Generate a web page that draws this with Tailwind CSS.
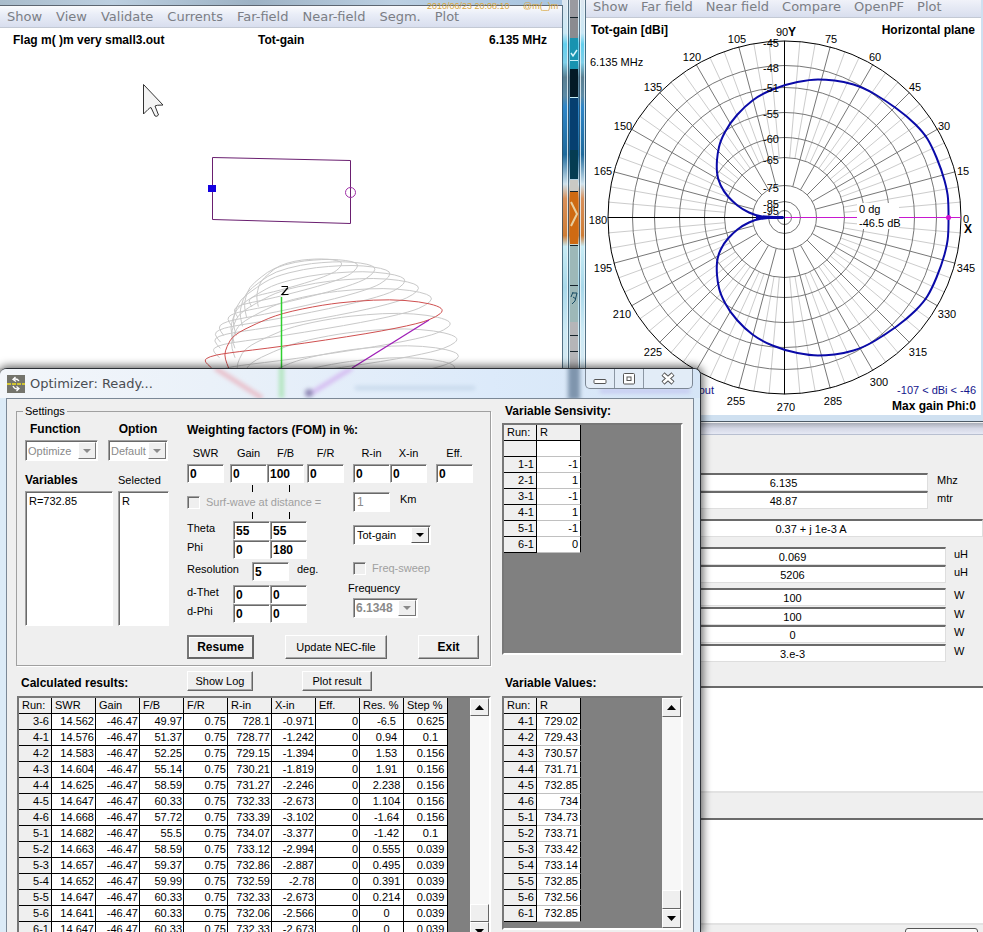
<!DOCTYPE html>
<html lang="en">
<head>
<meta charset="utf-8">
<title>Optimizer</title>
<script src="https://cdn.jsdelivr.net/npm/@tailwindcss/browser@4"></script>
</head>
<body class="relative h-screen overflow-hidden bg-[#efefef] font-['Liberation_Sans',Arial,sans-serif] text-[11px] leading-[14px] text-black">

<!-- desktop strip between the two upper windows -->
<div class="absolute left-[562px] top-0 h-[368px] w-6" aria-hidden="true">
  <svg class="block h-[368px] w-6" viewBox="562 0 24 368">
    <defs>
      <linearGradient id="glass" x1="0" y1="0" x2="0" y2="1">
        <stop offset="0" stop-color="#dde6ef"/><stop offset=".09" stop-color="#c9e8f5"/><stop offset=".12" stop-color="#62cfee"/>
        <stop offset=".17" stop-color="#7fd0ea"/><stop offset=".21" stop-color="#5a7f92"/><stop offset=".26" stop-color="#5c8aa5"/>
        <stop offset=".29" stop-color="#2f86c8"/><stop offset=".42" stop-color="#1f6a9c"/><stop offset=".5" stop-color="#cfe3ee"/>
        <stop offset=".54" stop-color="#d9905a"/><stop offset=".64" stop-color="#cf7d35"/><stop offset=".67" stop-color="#c8ecf5"/>
        <stop offset=".78" stop-color="#a8d8ea"/><stop offset=".9" stop-color="#cdeaf5"/><stop offset="1" stop-color="#d5e8f2"/>
      </linearGradient>
    </defs>
    <rect x="562" y="0" width="24" height="368" fill="url(#glass)"/>
    <path d="M562.5 5V368M568.5 0V368M579.5 0V368M585.500 0V368" stroke="#2b4a60" opacity=".75"/>
    <path d="M567.5 0V368M580.5 0V368M584.500 0V368" stroke="#eef8fc" opacity=".8"/>
    <g>
      <rect x="570" y="0" width="8" height="17" fill="#9a9aa0"/><rect x="570" y="17" width="8" height="21" fill="#8b8b90"/>
      <rect x="570" y="38" width="8" height="31" fill="#1893b0"/><rect x="570" y="69" width="8" height="28" fill="#041a26"/>
      <rect x="570" y="97" width="8" height="82" fill="#063f70"/><rect x="570" y="150" width="8" height="29" fill="#053c52"/>
      <rect x="570" y="180" width="8" height="11" fill="#c9c9c4"/><rect x="570" y="192" width="8" height="52" fill="#cf6a12"/>
      <rect x="570" y="245" width="8" height="123" fill="#9db8b8"/><rect x="570" y="322" width="8" height="46" fill="#b5b5b8"/>
    </g>
    <path d="M570 17.500h8M570 191.500h8M570 245.500h8M570 285.500h8M570 335.500h8M570 351.500h8" stroke="#15222a"/>
    <path d="M570 60.500h8M570 97.500h8" stroke="#c6f0f8"/>
    <path d="M571 53l2 3 4-6" stroke="#d6f3fa" fill="none" stroke-width="1.500"/>
    <path d="M571 202l6 12-6 12" stroke="#e8cfa0" fill="none" stroke-width="2"/>
    <path d="M573 292l-2 5M573 293h4l-2 8-3 3M573 297l3 2" stroke="#164a62" fill="none"/>
  </svg>
</div>

<!-- 3D pattern window -->
<section class="absolute left-0 top-0 flex w-[562px] flex-col bg-white">
  <div class="h-[5px] bg-[linear-gradient(90deg,#a9bccb,#bccfe0_20%,#9db2c4_45%,#bcd0e2_70%,#a7c4e0)]"></div>
  <nav class="flex h-[23px] items-center gap-[14px] border-b border-[#c3c9d4] border-t border-t-[#5d6671] bg-[linear-gradient(180deg,#fafbfd,#e9edf7_40%,#d8deee)] pl-[7px] font-['DejaVu_Sans',Verdana,sans-serif] text-[13px] text-[#7b7e85]">
    <a href="#">Show</a><a href="#">View</a><a href="#">Validate</a><a href="#">Currents</a><a href="#">Far-field</a><a href="#">Near-field</a><a href="#">Segm.</a><a href="#">Plot</a>
  </nav>
  <svg class="block w-full" viewBox="0 28 562 340" font-family="Liberation Sans, Arial, sans-serif" role="img" aria-label="Antenna geometry and 3D gain pattern">
    <g font-size="12" font-weight="bold">
      <text x="13" y="44">Flag m( )m very small3.out</text>
      <text x="258" y="44">Tot-gain</text>
      <text x="547" y="44" text-anchor="end">6.135 MHz</text>
    </g>
    <path d="M212.500 219.500V157.500L350.500 160.500V223.500Z" fill="none" stroke="#6a1f70"/>
    <rect x="208" y="185" width="8" height="7" fill="#1400e0"/>
    <circle cx="350.500" cy="192.500" r="5" fill="none" stroke="#a030a8"/>
    <g id="loops" fill="none"></g>
    <path d="M281.500 297V368" stroke="#2fd02f" stroke-width="1.500"/>
    <path d="M281.500 286.500H288M288 287.500L282 294.500H288.500" fill="none" stroke="#000" stroke-width="1.200"/>
    <path d="M429 320L352 368" stroke="#a020b8" stroke-width="1.300"/>
    <path d="M143.500 84.500V114L148 109.500Q150 107.500 151 107.500L155 116Q157 117 158.500 115L155 106Q156 105 163 105Z" fill="#f4f4f4" stroke="#333"/>
  </svg>
</section>
<div class="absolute left-[427px] top-0 text-[9px] leading-[13px] text-[#d9a53c]">2010/06/23 20:08:10</div>
<div class="absolute left-[523px] top-0 text-[9px] leading-[13px] text-[#d9a53c]">@m(_)m</div>

<!-- polar plot window -->
<section class="absolute left-[586px] right-0 top-0 flex flex-col border-b border-[#4d5a66] bg-[#cfe0f0] pr-[2px] pb-[6px]">
  <nav class="flex h-[18px] items-start gap-[13px] border-b border-[#c3c9d4] bg-[linear-gradient(180deg,#f0f2f9,#d8deee)] pl-[7px] font-['DejaVu_Sans',Verdana,sans-serif] text-[13px] text-[#7b7e85]">
    <a href="#">Show</a><a href="#">Far field</a><a href="#">Near field</a><a href="#">Compare</a><a href="#">OpenPF</a><a href="#">Plot</a>
  </nav>
  <svg class="block w-full bg-white" viewBox="586 18 395 397" font-family="Liberation Sans, Arial, sans-serif" font-size="11" role="img" aria-label="Horizontal plane polar gain plot">
    <g id="grid" fill="none"></g>
    <path d="M608 217.500H784.500M784.500 41V394" stroke="#000"/>
    <path id="lobe" fill="none" stroke="#0a0aa8" stroke-width="2"/>
    <path d="M756 217.500H783" stroke="#0a0aa8" stroke-width="3"/>
    <rect x="785" y="217" width="176" height="1" fill="#c818d0"/>
    <rect x="857" y="203" width="42" height="26" fill="#fff"/>
    <circle cx="948.500" cy="217.500" r="2.500" fill="#d010d0"/>
    <text x="859" y="213">0 dg</text><text x="859" y="227">-46.5 dB</text>
    <g id="ringText" text-anchor="middle"></g>
    <g id="angles" text-anchor="middle"></g>
    <g font-size="12" font-weight="bold">
      <text x="591" y="34">Tot-gain [dBi]</text>
      <text x="975" y="34" text-anchor="end">Horizontal plane</text>
      <text x="788" y="36">Y</text><text x="964" y="233">X</text>
      <text x="976" y="410" text-anchor="end">Max gain Phi:0</text>
    </g>
    <text x="590" y="66">6.135 MHz</text>
    <g fill="#14148c"><text x="976" y="394" text-anchor="end">-107 &lt; dBi &lt; -46</text><text x="714" y="394" text-anchor="end">out</text></g>
  </svg>
</section>

<!-- main window behind the dialog -->
<section class="absolute bottom-0 left-[632px] right-0 top-[423px] flex flex-col overflow-hidden bg-[#efefef] pl-2">
  <div class="-ml-2 h-3 shrink-0 border-b border-[#b8bfd0] bg-[linear-gradient(180deg,#a9adb8,#d5d8e6_50%,#e6e9f4)]"></div>
  <div id="fields" class="flex flex-col pt-[38px]"></div>
  <textarea aria-label="Comment" readonly class="mt-6 h-[107px] shrink-0 resize-none border-b-2 border-t-2 border-b-[#e2e2e2] border-t-[#6a6a6a] bg-white"></textarea>
  <textarea aria-label="Notes" readonly class="mt-[25px] h-[107px] shrink-0 resize-none border-b-2 border-t-2 border-b-[#e2e2e2] border-t-[#6a6a6a] bg-white"></textarea>
  <button aria-label="More" class="mr-[5px] mt-[3px] h-5 w-[73px] shrink-0 self-end rounded-[3px] border border-[#555] bg-[#fafafa]"></button>
</section>

<!-- optimizer dialog -->
<section class="absolute bottom-0 left-0 top-[368px] flex w-[701px] flex-col overflow-visible rounded-t-[7px] border-r border-t border-[#2c3036] bg-[#dcebf7] pl-[6px] pr-[6px] shadow-[0_0_9px_2px_rgba(0,0,0,0.6)]">
  <header class="relative -mx-[6px] flex h-[29px] shrink-0 items-center gap-[5px] overflow-hidden rounded-t-[6px] bg-[linear-gradient(90deg,#f3f6fa,#eaf1f9_30%,#dceafa_70%,#d5e5f6)] pl-[7px]">
    <svg class="absolute inset-0 h-full w-full" viewBox="0 369 700 29" aria-hidden="true">
      <defs><filter id="soft" filterUnits="userSpaceOnUse" x="0" y="360" width="700" height="45"><feGaussianBlur stdDeviation="2"/></filter></defs>
      <g filter="url(#soft)" fill="none" stroke-width="4">
        <path d="M215 368L262 398" stroke="#e9b7c2"/><path d="M281.500 365V398" stroke="#a5e3b0"/><path d="M352 368L310 394" stroke="#d3b5f0"/>
        <circle cx="309" cy="393" r="2" stroke="#8e86b4"/><path d="M355 388H475" stroke="#c6d8ea"/>
        <path d="M574 365V400" stroke="#7f95ad" stroke-width="12"/><path d="M600 391H690" stroke="#c3c6f0"/>
      </g>
    </svg>
    <svg class="relative h-[18px] w-[18px]" viewBox="0 0 18 18" aria-hidden="true">
      <rect width="18" height="18" fill="#74746c"/><path d="M0 9H18" stroke="#f0e020" stroke-width="1.500" stroke-dasharray="4 1"/>
      <path d="M12 6Q10 3 6 4.500M8.500 2L6 4.500L9 6.500M6 11Q8 15 12 13.500M9.500 11.500L12 13.500L9.500 16" fill="none" stroke="#fff" stroke-width="1.300"/>
    </svg>
    <h1 class="relative font-['DejaVu_Sans',Verdana,sans-serif] text-[13px] text-[#4a4d52]">Optimizer: Ready...</h1>
    <div class="relative ml-auto mr-[7px] flex h-5 self-start overflow-hidden rounded-b-[5px] border border-t-0 border-[#7c8794] bg-[#e2ecf7]">
      <button aria-label="Minimize" class="flex w-[29px] items-center justify-center border-r border-[#8c97a4]"><svg class="h-3 w-4" viewBox="0 0 16 12"><rect x="2" y="6.500" width="12" height="4" rx="1" fill="#fff" stroke="#555"/></svg></button>
      <button aria-label="Maximize" class="flex w-[29px] items-center justify-center border-r border-[#8c97a4]"><svg class="h-3 w-4" viewBox="0 0 16 12"><rect x="2.500" y=".5" width="11" height="10.500" rx="1" fill="#fff" stroke="#555"/><rect x="6" y="4" width="4" height="3.500" fill="none" stroke="#555"/></svg></button>
      <button aria-label="Close" class="flex w-[48px] items-center justify-center"><svg class="h-[13px] w-4" viewBox="0 0 16 13"><path d="M3 2L13 11M13 2L3 11" stroke="#555" stroke-width="4.500"/><path d="M3.500 2.500L12.500 10.500M12.500 2.500L3.500 10.500" stroke="#fff" stroke-width="2.500"/></svg></button>
    </div>
  </header>

  <main class="flex min-h-0 flex-1 gap-[11px] overflow-hidden border-x border-t border-[#7b8896] bg-[#efefef] pl-[9px]">
    <div class="flex w-[475px] shrink-0 flex-col">
      <fieldset class="mt-[5px] flex gap-[18px] border border-[#a0a0a0] pb-[6px] pl-2 shadow-[1px_1px_0_#fff]">
        <legend class="px-[2px] -ml-[2px]">Settings</legend>
        <div class="flex w-[144px] shrink-0 flex-col">
          <div class="flex h-[22px] items-center gap-[38px] pl-[5px] text-[12px] font-bold"><label for="fn">Function</label><label for="opt">Option</label></div>
          <div class="flex gap-[10px]">
            <div class="relative h-[21px] w-[73px]">
              <select id="fn" disabled class="block h-full w-full appearance-none border border-b-white border-l-[#a0a0a0] border-r-white border-t-[#a0a0a0] bg-white pl-[2px] text-[#8a8a8a] opacity-100 shadow-[inset_1px_1px_0_#696969]"><option>Optimize</option></select>
              <span class="pointer-events-none absolute bottom-[2px] right-[2px] top-[2px] flex w-[18px] items-center justify-center border border-b-[#777] border-l-white border-r-[#777] border-t-white bg-[#efefef] text-[#8a8a8a]"><svg class="h-1 w-2" viewBox="0 0 8 4" fill="currentColor"><path d="M0 0H8L4 4Z"/></svg></span>
            </div>
            <div class="relative h-[21px] w-[60px]">
              <select id="opt" disabled class="block h-full w-full appearance-none border border-b-white border-l-[#a0a0a0] border-r-white border-t-[#a0a0a0] bg-white pl-[2px] text-[#8a8a8a] opacity-100 shadow-[inset_1px_1px_0_#696969]"><option>Default</option></select>
              <span class="pointer-events-none absolute bottom-[2px] right-[2px] top-[2px] flex w-[18px] items-center justify-center border border-b-[#777] border-l-white border-r-[#777] border-t-white bg-[#efefef] text-[#8a8a8a]"><svg class="h-1 w-2" viewBox="0 0 8 4" fill="currentColor"><path d="M0 0H8L4 4Z"/></svg></span>
            </div>
          </div>
          <div class="flex h-[30px] items-center gap-[5px] pt-2"><span class="w-[88px] text-[12px] font-bold">Variables</span><span>Selected</span></div>
          <div class="flex h-[135px] gap-[5px]">
            <ul aria-label="Variables" class="w-[88px] border border-b-white border-l-[#a0a0a0] border-r-white border-t-[#a0a0a0] bg-white pl-[3px] pt-[2px] shadow-[inset_1px_1px_0_#696969]"><li>R=732.85</li></ul>
            <ul aria-label="Selected" class="w-[51px] border border-b-white border-l-[#a0a0a0] border-r-white border-t-[#a0a0a0] bg-white pl-[3px] pt-[2px] shadow-[inset_1px_1px_0_#696969]"><li>R</li></ul>
          </div>
        </div>

        <div class="flex flex-1 flex-col">
          <h2 class="flex h-6 items-center text-[12px] font-bold">Weighting factors (FOM) in %:</h2>
          <div id="weights" class="flex"></div>
          <div class="relative flex h-[38px] items-center">
            <i class="absolute left-[65px] top-[2px] h-[7px] w-px bg-black"></i><i class="absolute left-[102px] top-[2px] h-[7px] w-px bg-black"></i>
            <i class="absolute bottom-[2px] left-[65px] h-[7px] w-px bg-black"></i><i class="absolute bottom-[2px] left-[102px] h-[7px] w-px bg-black"></i>
            <label class="flex w-[166px] items-center gap-[6px] whitespace-nowrap text-[#a0a0a0]"><input type="checkbox" disabled class="h-[13px] w-[13px] appearance-none border border-b-white border-l-[#a0a0a0] border-r-white border-t-[#a0a0a0] shadow-[inset_1px_1px_0_#696969]">Surf-wave at distance =</label>
            <input id="km" disabled value="1" class="h-5 w-[37px] border border-b-white border-l-[#a0a0a0] border-r-white border-t-[#a0a0a0] bg-white pl-[3px] text-[12px] text-[#8a8a8a] shadow-[inset_1px_1px_0_#696969]"><label for="km" class="pb-[6px] pl-[10px]">Km</label>
          </div>
          <div class="flex">
            <div class="flex w-[161px] shrink-0 flex-col" id="angleRows"></div>
            <div class="flex flex-col pt-1">
              <div class="relative ml-[5px] h-5 w-[78px]">
                <select aria-label="Gain type" class="block h-full w-full appearance-none border border-b-white border-l-[#a0a0a0] border-r-white border-t-[#a0a0a0] bg-white pl-[3px] shadow-[inset_1px_1px_0_#696969]"><option>Tot-gain</option></select>
                <span class="pointer-events-none absolute bottom-[2px] right-[2px] top-[2px] flex w-[18px] items-center justify-center border border-b-[#555] border-l-white border-r-[#555] border-t-white bg-[#efefef]"><svg class="h-1 w-2" viewBox="0 0 8 4"><path d="M0 0H8L4 4Z"/></svg></span>
              </div>
              <label class="ml-[5px] mt-[13px] flex h-5 items-center gap-[6px] text-[#a0a0a0]"><input type="checkbox" disabled class="h-[13px] w-[13px] appearance-none border border-b-white border-l-[#a0a0a0] border-r-white border-t-[#a0a0a0] shadow-[inset_1px_1px_0_#696969]">Freq-sweep</label>
              <label for="freq" class="flex h-5 items-center">Frequency</label>
              <div class="relative ml-[5px] h-5 w-[65px]">
                <select id="freq" disabled class="block h-full w-full appearance-none border border-b-white border-l-[#a0a0a0] border-r-white border-t-[#a0a0a0] bg-white pl-[2px] text-[12px] font-bold text-[#8a8a8a] opacity-100 shadow-[inset_1px_1px_0_#696969]"><option>6.1348</option></select>
                <span class="pointer-events-none absolute bottom-[2px] right-[2px] top-[2px] flex w-[18px] items-center justify-center border border-b-[#777] border-l-white border-r-[#777] border-t-white bg-[#efefef] text-[#8a8a8a]"><svg class="h-1 w-2" viewBox="0 0 8 4" fill="currentColor"><path d="M0 0H8L4 4Z"/></svg></span>
              </div>
            </div>
          </div>
          <div class="mt-3 flex">
            <button class="h-6 w-[67px] border-2 border-b-[#666] border-l-[#777] border-r-[#666] border-t-[#777] bg-[#efefef] text-[12px] font-bold shadow-[inset_1px_1px_0_#fff]">Resume</button>
            <button class="ml-[31px] h-6 w-[102px] border border-b-[#666] border-l-white border-r-[#666] border-t-white bg-[#efefef] shadow-[inset_-1px_-1px_0_#a8a8a8]">Update NEC-file</button>
            <button class="ml-[31px] h-6 w-[61px] border border-b-[#666] border-l-white border-r-[#666] border-t-white bg-[#efefef] text-[12px] font-bold shadow-[inset_-1px_-1px_0_#a8a8a8]">Exit</button>
          </div>
        </div>
      </fieldset>

      <div class="flex h-[30px] shrink-0 items-center pl-[5px]">
        <h2 class="w-[166px] pt-1 text-[12px] font-bold">Calculated results:</h2>
        <button class="h-5 w-[66px] border border-b-[#666] border-l-white border-r-[#666] border-t-white bg-[#efefef] shadow-[inset_-1px_-1px_0_#a8a8a8]">Show Log</button>
        <button class="ml-[49px] h-5 w-[70px] border border-b-[#666] border-l-white border-r-[#666] border-t-white bg-[#efefef] shadow-[inset_-1px_-1px_0_#a8a8a8]">Plot result</button>
      </div>
      <div class="ml-[1px] flex h-[246px] shrink-0 justify-between border-2 border-b-white border-l-[#777] border-r-white border-t-[#777] bg-[#808080]">
        <table id="results" class="h-fit w-[429px] table-fixed border-separate border-spacing-0 whitespace-nowrap"></table>
        <div class="flex w-[19px] flex-col bg-[#f7f7f7]">
          <button aria-label="Scroll up" class="flex h-[19px] items-center justify-center border border-b-[#666] border-l-white border-r-[#666] border-t-white bg-[#efefef]"><svg class="h-[5px] w-[9px]" viewBox="0 0 9 5"><path d="M0 5H9L4.500 0Z"/></svg></button>
          <div class="mt-[188px] h-[19px] border border-b-[#666] border-l-white border-r-[#666] border-t-white bg-[#efefef]"></div>
          <button aria-label="Scroll down" class="flex h-[19px] items-center justify-center border border-b-[#666] border-l-white border-r-[#666] border-t-white bg-[#efefef]"><svg class="h-[5px] w-[9px]" viewBox="0 0 9 5"><path d="M0 0H9L4.500 5Z"/></svg></button>
        </div>
      </div>
    </div>

    <div class="flex w-[181px] shrink-0 flex-col">
      <h2 class="flex h-6 shrink-0 items-center pl-[3px] text-[12px] font-bold">Variable Sensivity:</h2>
      <div class="h-[232px] shrink-0 border-2 border-b-white border-l-[#777] border-r-white border-t-[#777] bg-[#808080]">
        <table id="sens" class="w-[77px] table-fixed border-separate border-spacing-0"></table>
      </div>
      <h2 class="flex h-[41px] shrink-0 items-center pl-[3px] pt-[14px] text-[12px] font-bold">Variable Values:</h2>
      <div class="flex h-[234px] shrink-0 justify-between border-2 border-b-white border-l-[#777] border-r-white border-t-[#777] bg-[#808080]">
        <table id="vals" class="h-fit w-[77px] table-fixed border-separate border-spacing-0"></table>
        <div class="flex w-[19px] flex-col bg-[#f7f7f7]">
          <button aria-label="Scroll up" class="flex h-[19px] items-center justify-center border border-b-[#666] border-l-white border-r-[#666] border-t-white bg-[#efefef]"><svg class="h-[5px] w-[9px]" viewBox="0 0 9 5"><path d="M0 5H9L4.500 0Z"/></svg></button>
          <div class="mt-auto h-[19px] border border-b-[#666] border-l-white border-r-[#666] border-t-white bg-[#efefef]"></div>
          <button aria-label="Scroll down" class="flex h-[19px] items-center justify-center border border-b-[#666] border-l-white border-r-[#666] border-t-white bg-[#efefef]"><svg class="h-[5px] w-[9px]" viewBox="0 0 9 5"><path d="M0 0H9L4.500 5Z"/></svg></button>
        </div>
      </div>
    </div>
  </main>
</section>

<script>
const $ = id => document.getElementById(id);

// Polar grid
const CX = 784.5, CY = 217.5;
let g = '';
const ray = (deg, r1, r2, c) => {
  const a = deg * Math.PI / 180, x = Math.cos(a), y = -Math.sin(a);
  return `<path d="M${CX + r1 * x} ${CY + r1 * y}L${CX + r2 * x} ${CY + r2 * y}" stroke="${c}"/>`;
};
for (let d = 5; d < 360; d += 5) g += d % 15 ? ray(d, 60, 177, '#cccccc') : ray(d, 32, 177, '#777777');
[7, 16, 32, 60, 80, 105, 130, 152].forEach(r => g += `<circle cx="${CX}" cy="${CY}" r="${r}" stroke="#777777"/>`);
g += `<circle cx="${CX}" cy="${CY}" r="176.500" stroke="#000"/>`;
$('grid').innerHTML = g;

// Smooth open curve through the midpoints of a point list
const curve = p => {
  let d = `M${p[0].join(' ')}`;
  for (let i = 1; i < p.length - 1; i++) d += `Q${p[i].join(' ')} ${(p[i][0] + p[i + 1][0]) / 2} ${(p[i][1] + p[i + 1][1]) / 2}`;
  return `${d}L${p[p.length - 1].join(' ')}`;
};

// Lobe: upper half offsets from the centre, mirrored for the lower half
const half = [[164,0],[164,12],[163,26],[157,48],[147,72],[139,85],[123,101],[101,117],[79,130],[59,136],[41,138],[26,138],[0,133],[-24,123],[-40,111],[-55,94],[-64,77],[-67,64],[-68,51],[-67,39],[-61,26],[-52,16],[-42,8],[-29,2],[-18,.5],[0,0]];
const pts = half.slice(1).reverse().map(([x, y]) => [CX + x, CY - y]).concat(half.map(([x, y]) => [CX + x, CY + y]));
$('lobe').setAttribute('d', curve(pts));

$('angles').innerHTML = [[782,36,90],[737,43,105],[692,61,120],[653,91,135],[623,130,150],[603,175,165],[598,224,180],[603,272,195],[622,318,210],[653,356,225],[736,405,255],[786,411,270],[833,405,285],[879,386,300],[918,356,315],[947,318,330],[966,272,345],[966,223,0],[963,175,15],[944,130,30],[915,91,45],[875,61,60],[831,43,75]]
  .map(([x, y, t]) => `<text x="${x}" y="${y}">${t}</text>`).join('');
$('ringText').innerHTML = [[47,-45],[72,-48],[92,-51],[118,-55],[143,-60],[164,-65],[192,-75],[208,-85],[215,-95]]
  .map(([y, t]) => `<text x="771" y="${y}">${t}</text>`).join('');

// 3D pattern loops: one outline anchored at its right tip; sx scales width and crest, sy the drop to the left end
const outline = [[-641,176],[-647,162],[-654,137],[-647,112],[-627,77],[-557,42],[-484,12],[-357,-14],[-257,-25],[-157,-30],[-67,-23],[-12,-10],[4,4],[-17,22],[-67,42],[-217,72],[-484,112],[-654,132],[-700,142],[-716,154],[-692,176]];
const draw = ([tx, ty, sx, sy, c]) =>
  `<path d="${curve(outline.map(([x, y]) => [190 + (tx + x * sx) / 3, 240 + (ty + y * (y < 0 ? sx : sy)) / 3]))}" stroke="${c}"/>`;
$('loops').innerHTML = [[455,68,.39,.75],[503,73,.52,.9],[555,83,.62,1],[600,97,.72,1.08],[645,118,.8,1.07],[686,140,.86,1.05],[725,172,.92,1.03],[781,248,.98,.98],[801,295,.99,.95],[806,345,.97,.92],[795,380,.95,.9]]
  .map(a => draw([...a, '#c9c9c9'])).join('') + draw([757, 208, 1, 1, '#cf5050']);

// Read-only values in the main window
const wide = 'w-[55px] pb-1 pl-[9px]', slim = 'w-[37px] pb-1 pl-2';
$('fields').innerHTML = [['6.135','Mhz',wide,''],['48.87','mtr',wide,''],['0.37 + j 1e-3 A','','','mt-[10px]'],['0.069','uH',slim,'mt-[10px]'],['5206','uH',slim,''],['100','W',slim,'mt-[5px]'],['100','W',slim,'mt-px'],['0','W',slim,''],['3.e-3','W',slim,'mt-px']]
  .map(([v, u, c, m], i) => `<div class="flex items-center ${m}"><input id="f${i}" aria-label="Value ${i + 1}" readonly value="${v}" class="h-[18px] min-w-0 flex-1 border-b border-r border-t-2 border-b-[#dedede] border-r-[#dedede] border-t-[#6a6a6a] bg-white text-center">${u ? `<label for="f${i}" class="${c}">${u}</label>` : ''}</div>`).join('');

// Weight inputs
const box = 'h-[19px] w-[37px] border border-b-white border-l-[#a0a0a0] border-r-white border-t-[#a0a0a0] bg-white pl-[2px] text-[12px] font-bold shadow-[inset_1px_1px_0_#696969]';
$('weights').innerHTML = [['SWR',0,'mr-[6px]'],['Gain',0,''],['F/B',100,'mr-[3px]'],['F/R',0,'mr-[9px]'],['R-in',0,''],['X-in',0,'mr-[9px]'],['Eff.',0,'']]
  .map(([l, v, m]) => `<label class="flex w-[37px] flex-col ${m}"><span class="flex h-[22px] items-center justify-center">${l}</span><input value="${v}" class="${box}"></label>`).join('');
$('angleRows').innerHTML = [['Theta',['55','55'],''],['Phi',['0','180'],''],['Resolution',['5'],'mt-[3px]'],['d-Thet',['0','0'],'mt-1'],['d-Phi',['0','0'],'']]
  .map(([l, v, m], i) => `<div class="flex h-[19px] items-center ${m}"><label for="a${i}" class="${v.length === 1 ? 'w-[65px]' : 'w-[46px]'} pb-[6px]">${l}</label>${v.map((x, j) => `<input ${j ? `aria-label="${l} 2"` : `id="a${i}"`} value="${x}" class="${box}">`).join('')}${v.length === 1 ? '<span class="pb-[6px] pl-2">deg.</span>' : ''}</div>`).join('');

// Grids
const head = 'h-4 border-b border-r border-black bg-[#efefef] p-0 pl-[3px] text-left font-normal leading-[15px]';
const side = 'h-4 border-b border-r border-black bg-[#efefef] p-0 pr-[2px] text-right font-normal leading-[15px]';
const cell = 'h-4 border-b border-r border-black bg-white p-0 pr-[1px] text-right leading-[15px]';
const mid = 'h-4 border-b border-r border-black bg-white p-0 pl-[10px] text-center leading-[15px]';
const pale = 'h-4 border-b border-r border-b-[#c0c0c0] border-r-black bg-white p-0 pr-[2px] text-right leading-[15px]';
const table = (id, widths, heads, rows, cls) => {
  $(id).innerHTML = `<colgroup>${widths.map(w => `<col class="${w}">`).join('')}</colgroup><thead><tr>${heads.map(h => `<th class="${head}">${h}</th>`).join('')}</tr></thead><tbody>` +
    rows.map(r => `<tr>${r.map((v, i) => i ? `<td class="${cls(i)}">${v}</td>` : `<th class="${side}">${v}</th>`).join('')}</tr>`).join('') + '</tbody>';
};
const R = `3-6 14.562 49.97 728.1 -0.971 -6.5 0.625
4-1 14.576 51.37 728.77 -1.242 0.94 0.1
4-2 14.583 52.25 729.15 -1.394 1.53 0.156
4-3 14.604 55.14 730.21 -1.819 1.91 0.156
4-4 14.625 58.59 731.27 -2.246 2.238 0.156
4-5 14.647 60.33 732.33 -2.673 1.104 0.156
4-6 14.668 57.72 733.39 -3.102 -1.64 0.156
5-1 14.682 55.5 734.07 -3.377 -1.42 0.1
5-2 14.663 58.59 733.12 -2.994 0.555 0.039
5-3 14.657 59.37 732.86 -2.887 0.495 0.039
5-4 14.652 59.99 732.59 -2.78 0.391 0.039
5-5 14.647 60.33 732.33 -2.673 0.214 0.039
5-6 14.641 60.33 732.06 -2.566 0 0.039
6-1 14.647 60.33 732.33 -2.673 0 0.039`.split('\n').map(l => { const [a, b, c, d, e, f, h] = l.split(' '); return [a, b, '-46.47', c, '0.75', d, e, '0', f, h]; });
table('results', ['w-[33px]', ...Array(9).fill('w-[44px]')], ['Run:','SWR','Gain','F/B','F/R','R-in','X-in','Eff.','Res. %','Step %'], R, i => i > 7 ? mid : cell);
table('sens', ['w-[33px]','w-[44px]'], ['Run:','R'], [['',''],['1-1','-1'],['2-1','1'],['3-1','-1'],['4-1','1'],['5-1','-1'],['6-1','0']], () => pale);
table('vals', ['w-[33px]','w-[44px]'], ['Run:','R'], [['4-1','729.02'],['4-2','729.43'],['4-3','730.57'],['4-4','731.71'],['4-5','732.85'],['4-6','734'],['5-1','734.73'],['5-2','733.71'],['5-3','733.42'],['5-4','733.14'],['5-5','732.85'],['5-6','732.56'],['6-1','732.85']], () => pale);
</script>
</body>
</html>
